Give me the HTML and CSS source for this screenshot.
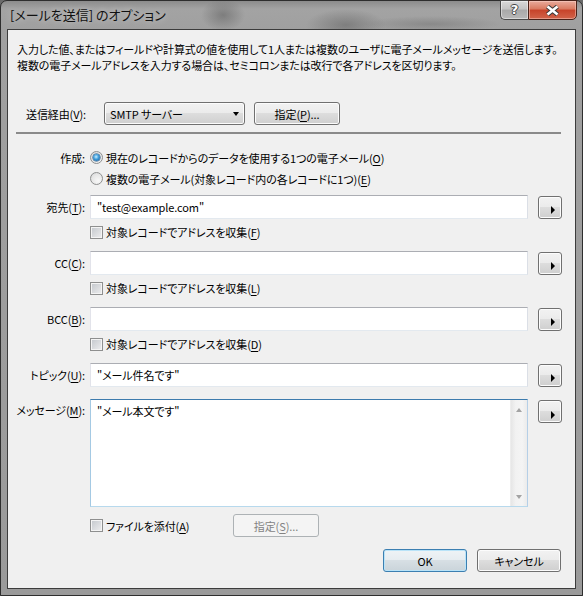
FILE: index.html
```html
<!DOCTYPE html>
<html lang="ja">
<head>
<meta charset="utf-8">
<title>[メールを送信] のオプション</title>
<link rel="stylesheet" href="styles.css">
</head>
<body>
<div class="window">
  <div class="titlebar">
    <div class="title">[メールを送信] のオプション</div>
    <div class="caption">
      <div class="cap-help">?</div>
      <div class="cap-close">
        <svg width="15" height="11" viewBox="0 0 15 11">
          <path d="M2.5 1.5 L12.5 9.5 M12.5 1.5 L2.5 9.5" stroke="#3a3a3a" stroke-width="4.6" fill="none"/>
          <path d="M2.5 1.5 L12.5 9.5 M12.5 1.5 L2.5 9.5" stroke="#ffffff" stroke-width="2.6" fill="none"/>
        </svg>
      </div>
    </div>
  </div>
  <div class="client">
    <p class="desc">入力した値、またはフィールドや計算式の値を使用して1人または複数のユーザに電子メールメッセージを送信します。<br>複数の電子メールアドレスを入力する場合は、セミコロンまたは改行で各アドレスを区切ります。</p>

    <div class="via-row">
      <span class="via-label">送信経由(<u>V</u>):</span>
      <div class="combo"><span>SMTP サーバー</span><span class="combo-arrow"></span></div>
      <div class="btn btn-spec">指定(<u>P</u>)...</div>
    </div>

    <div class="sep"></div>

    <div class="row radio-row first">
      <span class="lbl">作成:</span>
      <span class="radio checked"></span><span>現在のレコードからのデータを使用する1つの電子メール(<u>O</u>)</span>
    </div>
    <div class="row radio-row indent">
      <span class="radio"></span><span>複数の電子メール(対象レコード内の各レコードに1つ)(<u>E</u>)</span>
    </div>

    <div class="row field-row">
      <span class="lbl">宛先(<u>T</u>):</span>
      <div class="input">"test@example.com"</div>
      <div class="btn arrow-btn"><span class="tri"></span></div>
    </div>
    <div class="row chk-row indent">
      <span class="chk"></span><span>対象レコードでアドレスを収集(<u>F</u>)</span>
    </div>

    <div class="row field-row">
      <span class="lbl">CC(<u>C</u>):</span>
      <div class="input"></div>
      <div class="btn arrow-btn"><span class="tri"></span></div>
    </div>
    <div class="row chk-row indent">
      <span class="chk"></span><span>対象レコードでアドレスを収集(<u>L</u>)</span>
    </div>

    <div class="row field-row">
      <span class="lbl">BCC(<u>B</u>):</span>
      <div class="input"></div>
      <div class="btn arrow-btn"><span class="tri"></span></div>
    </div>
    <div class="row chk-row indent">
      <span class="chk"></span><span>対象レコードでアドレスを収集(<u>D</u>)</span>
    </div>

    <div class="row field-row">
      <span class="lbl">トピック(<u>U</u>):</span>
      <div class="input">"メール件名です"</div>
      <div class="btn arrow-btn"><span class="tri"></span></div>
    </div>

    <div class="row memo-row">
      <span class="lbl">メッセージ(<u>M</u>):</span>
      <div class="memo">
        <div class="memo-text">"メール本文です"</div>
        <div class="scrollbar">
          <span class="sb-up"></span>
          <span class="sb-down"></span>
        </div>
      </div>
      <div class="btn arrow-btn"><span class="tri"></span></div>
    </div>

    <div class="row attach-row indent">
      <div class="attach-chk"><span class="chk"></span><span>ファイルを添付(<u>A</u>)</span></div>
      <div class="btn btn-disabled">指定(<u>S</u>)...</div>
    </div>

    <div class="footer">
      <div class="btn btn-default">OK</div>
      <div class="btn">キャンセル</div>
    </div>
  </div>
</div>
</body>
</html>
```

FILE: styles.css
```css
* { box-sizing: border-box; }
html, body { margin: 0; padding: 0; }
body {
  width: 583px;
  height: 596px;
  overflow: hidden;
  background: #6a6a6a;
  font-family: "Noto Sans CJK JP", "Noto Sans", sans-serif;
  font-size: 11px;
  letter-spacing: -0.1px;
  font-feature-settings: "palt";
  color: #000;
}
u { text-decoration: underline; text-underline-offset: 2px; }

.window {
  width: 583px;
  height: 596px;
  border: 1px solid #2e2e2e;
  border-radius: 7px 7px 0 0;
  padding: 0 6px 6px 6px;
  display: flex;
  flex-direction: column;
  background:
    radial-gradient(ellipse 22px 16px at 222px 14px, rgba(95,95,95,.55), rgba(95,95,95,0)),
    radial-gradient(ellipse 40px 16px at 345px 24px, rgba(85,85,85,.45), rgba(85,85,85,0)),
    radial-gradient(ellipse 70px 8px at 430px 23px, rgba(95,95,95,.35), rgba(95,95,95,0)),
    linear-gradient(to bottom, #8c8c8c 0, #a3a3a3 8px, #a0a0a0 28px, #9a9a9a 100%);
}

.titlebar {
  height: 28px;
  display: flex;
  justify-content: space-between;
  flex: none;
}
.title {
  padding: 6px 0 0 3px;
  font-size: 13px;
  letter-spacing: 0;
  line-height: 16px;
  color: #111;
  text-shadow: 0 0 6px rgba(255,255,255,.55);
}
.caption {
  display: flex;
  margin-top: -1px;
  margin-right: -1px;
  height: 20px;
}
.cap-help {
  width: 28px;
  height: 20px;
  border: 1px solid #4a4a4a;
  border-right: none;
  border-radius: 0 0 0 5px;
  background: linear-gradient(#d9d9d9, #c4c4c4 45%, #a9a9a9 50%, #b9b9b9);
  box-shadow: inset 0 0 0 1px rgba(255,255,255,.45);
  color: #fff;
  font-family: "DejaVu Sans", sans-serif;
  font-weight: bold;
  font-size: 13px;
  letter-spacing: 0;
  line-height: 18px;
  text-align: center;
  text-shadow: -1px 0 #444, 1px 0 #444, 0 -1px #444, 0 1px #444;
}
.cap-close {
  width: 49px;
  height: 20px;
  border: 1px solid #4a2219;
  border-radius: 0 0 5px 0;
  background: linear-gradient(#e9ab9c, #d9795f 45%, #c7432a 50%, #d2644a);
  box-shadow: inset 0 0 0 1px rgba(255,220,210,.45);
  display: flex;
  align-items: center;
  justify-content: center;
}

.client {
  flex: 1;
  border: 1px solid #3c3c3c;
  background: #f0f0f0;
  display: flex;
  flex-direction: column;
}

.desc {
  margin: 0;
  padding: 11px 0 0 9px;
  line-height: 16px;
  white-space: nowrap;
}

.via-row {
  margin-top: 29px;
  height: 23px;
  display: flex;
  align-items: center;
  padding-left: 18px;
}
.via-label { width: 78px; flex: none; }

.btn {
  height: 23px;
  border: 1px solid #707070;
  border-radius: 3px;
  background: linear-gradient(#f2f2f2 0%, #ebebeb 49%, #dddddd 50%, #cfcfcf 100%);
  box-shadow: inset 0 0 0 1px #fcfcfc;
  display: flex;
  align-items: center;
  justify-content: center;
  flex: none;
  white-space: nowrap;
}
.combo {
  width: 141px;
  height: 23px;
  border: 1px solid #707070;
  border-radius: 3px;
  background: linear-gradient(#f2f2f2 0%, #ebebeb 49%, #dddddd 50%, #cfcfcf 100%);
  box-shadow: inset 0 0 0 1px #fcfcfc;
  display: flex;
  align-items: center;
  justify-content: space-between;
  padding: 0 5px 0 5px;
  flex: none;
}
.combo-arrow {
  width: 0;
  height: 0;
  border-left: 3.5px solid transparent;
  border-right: 3.5px solid transparent;
  border-top: 4px solid #000;
}
.btn-spec { width: 86px; margin-left: 9px; }

.sep {
  margin: 7px 14px 0 8px;
  height: 2px;
  background: #8a8a8a;
  flex: none;
}

.row {
  display: flex;
  align-items: center;
  flex: none;
}
.lbl {
  width: 77px;
  margin-right: 5px;
  text-align: right;
  flex: none;
  white-space: nowrap;
}
.indent { padding-left: 82px; }

.radio-row { height: 21px; }
.radio-row.first { margin-top: 13px; }
.radio {
  width: 13px;
  height: 13px;
  border-radius: 50%;
  border: 1px solid #8e8f8f;
  background: radial-gradient(circle at 65% 70%, #f8f8f8 0, #e6e6e6 60%, #cfd1d3 100%);
  margin-right: 3px;
  display: flex;
  align-items: center;
  justify-content: center;
  flex: none;
}
.radio.checked::after {
  content: "";
  width: 7px;
  height: 7px;
  border-radius: 50%;
  background: radial-gradient(circle at 45% 40%, #c8efff 0, #3b9ad9 45%, #1a4f86 100%);
  box-shadow: 0 0 0 0.5px #1e4e7a;
}

.field-row { margin-top: 6px; height: 24px; }
.chk-row { margin-top: 6px; height: 14px; }
.chk-row + .field-row { margin-top: 12px; }

.input {
  width: 438px;
  height: 24px;
  background: #fff;
  border: 1px solid;
  border-color: #abadb3 #dbdfe6 #e3e9ef #e2e3ea;
  padding-left: 6px;
  display: flex;
  align-items: center;
  flex: none;
}
.arrow-btn {
  width: 24px;
  height: 23px;
  margin-left: 10px;
  padding: 6px 0 0 6px;
}
.tri {
  width: 0;
  height: 0;
  border-top: 4px solid transparent;
  border-bottom: 4px solid transparent;
  border-left: 4px solid #000;
}

.chk {
  width: 13px;
  height: 13px;
  border: 1px solid #8e8f8f;
  background: linear-gradient(135deg, #c3c7cc, #eeeeef);
  box-shadow: inset 0 0 0 1px #f4f4f4;
  margin-right: 3px;
  flex: none;
}

.memo-row {
  margin-top: 12px;
  align-items: flex-start;
}
.memo-row .lbl { padding-top: 3px; line-height: 16px; }
.memo-row .arrow-btn { margin-top: 1px; }
.memo {
  width: 438px;
  height: 108px;
  background: #fff;
  border: 1px solid;
  border-color: #3d7bad #b5cfe7 #b7d9ed #a4c9e3;
  display: flex;
  flex: none;
}
.memo-text {
  flex: 1;
  padding: 3px 6px;
  line-height: 16px;
}
.scrollbar {
  width: 17px;
  background: linear-gradient(to right, #e6e6e6, #f2f2f2 30%, #f4f4f4 70%, #ebebeb);
  border-left: 1px solid #ededed;
  display: flex;
  flex-direction: column;
  justify-content: space-between;
  align-items: center;
  padding: 8px 0 7px 0;
}
.sb-up, .sb-down {
  width: 0;
  height: 0;
  border-left: 3.5px solid transparent;
  border-right: 3.5px solid transparent;
}
.sb-up { border-bottom: 4px solid #a3a3a3; }
.sb-down { border-top: 4px solid #a3a3a3; }

.attach-row { margin-top: 7px; height: 23px; }
.attach-chk { width: 143px; display: flex; align-items: center; flex: none; }
.btn-disabled {
  width: 86px;
  border-color: #adb2b5;
  background: #f4f4f4;
  box-shadow: none;
  color: #838383;
}

.footer {
  margin-top: 12px;
  display: flex;
  justify-content: flex-end;
  gap: 10px;
  padding-right: 14px;
  flex: none;
}
.footer .btn { width: 84px; }
.btn-default {
  border-color: #3c7fb1;
  box-shadow: inset 0 0 0 1px #b9e3f8;
  background: linear-gradient(#eef3f6 0%, #e6ecf0 49%, #d7dfe4 50%, #cad4da 100%);
}
```
